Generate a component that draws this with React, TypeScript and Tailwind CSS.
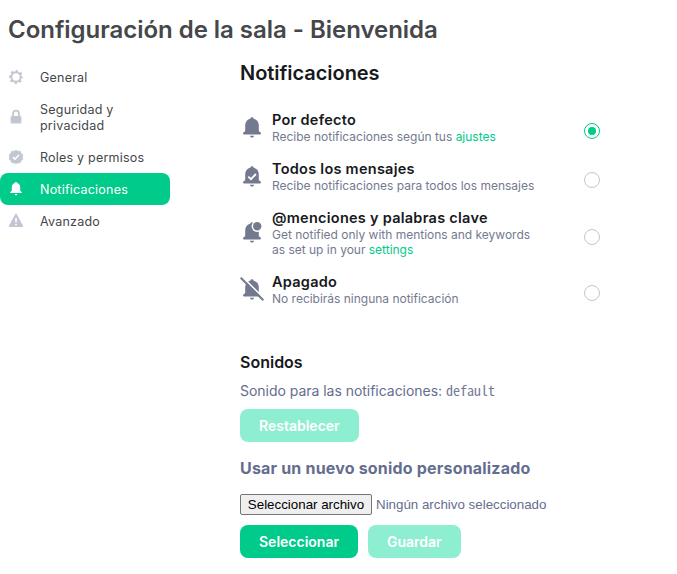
import type { ReactNode } from "react";

const BELL =
  "M12 2.300c.9 0 1.600.6 1.700 1.400 3.100.7 5.100 3.200 5.100 6.600v5.700l1.900 1.800c.7.7.4 1.600-.5 1.600H3.800c-.9 0-1.200-.9-.5-1.600l1.900-1.800v-5.700c0-3.400 2-5.900 5.100-6.600 .1-.8.8-1.400 1.700-1.400Z";
const CLAPPER = "M10 20.700h4c0 1.100-.9 1.800-2 1.800s-2-.7-2-1.800Z";

function GearIcon() {
  return (
    <svg className="size-4" viewBox="0 0 16 16" fill="none" stroke="currentColor">
      <circle cx="8" cy="8" r="4.700" strokeWidth="2" />
      <circle cx="8" cy="8" r="6.100" strokeWidth="2" strokeDasharray="2.200 2.590" strokeDashoffset="1.100" />
    </svg>
  );
}

function LockIcon() {
  return (
    <svg className="size-4" viewBox="0 0 16 16">
      <rect x="2.600" y="7" width="10.800" height="7.500" rx="1.400" fill="currentColor" />
      <path d="M5 8V4.600a3 3 0 0 1 6 0v3.400" fill="none" stroke="currentColor" strokeWidth="1.800" />
    </svg>
  );
}

function RolesIcon() {
  return (
    <svg className="size-4" viewBox="0 0 16 16">
      <path
        d="M8 1.200l2 1 2.400 0 .8 2.200 1.800 1.500L14.300 8l.7 2.200-1.800 1.500-.8 2.100-2.400.1L8 14.800l-2-.9-2.400-.1-.8-2.100L1 10.200 1.700 8 1 5.900l1.800-1.500.8-2.200H6z"
        fill="currentColor"
        stroke="currentColor"
        strokeWidth=".5"
        strokeLinejoin="round"
      />
      <path d="M4.900 8.100l2.100 2 4-4.100" fill="none" stroke="white" strokeWidth="1.500" />
    </svg>
  );
}

function SmallBellIcon() {
  return (
    <svg className="size-4" viewBox="0 0 16 16" fill="currentColor">
      <path d="M8 1c.6 0 1 .4 1 1 2 .5 3.200 2 3.200 4.200v3.400l1.400 1.500c.5.5.2 1-.4 1H2.800c-.6 0-.9-.5-.4-1l1.400-1.500V6.200C3.800 4 5 2.500 7 2c0-.6.4-1 1-1Z" />
      <path d="M6.700 13h2.600c0 .8-.5 1.300-1.300 1.300S6.700 13.800 6.700 13Z" />
    </svg>
  );
}

function WarningIcon() {
  return (
    <svg className="size-4" viewBox="0 0 16 16">
      <path d="M8 1.800l6.200 11.400H1.800z" fill="currentColor" stroke="currentColor" strokeWidth="1.800" strokeLinejoin="round" />
      <path d="M8 5v4.500M8 11v1.600" stroke="white" strokeWidth="1.600" />
    </svg>
  );
}

function Bell({ kind }: { kind: "plain" | "check" | "dot" | "off" }) {
  return (
    <svg className="-mt-[2px] size-6 shrink-0 text-[#737a90]" viewBox="0 0 24 24">
      <path d={BELL} fill="currentColor" />
      <path d={CLAPPER} fill="currentColor" />
      {kind === "check" && <path d="M8.300 12.600l2.700 2.600 4.900-5.200" fill="none" stroke="white" strokeWidth="1.900" />}
      {kind === "dot" && (
        <>
          <circle cx="17.200" cy="6.300" r="5.600" fill="white" />
          <circle cx="17.200" cy="6.300" r="4.200" fill="currentColor" />
        </>
      )}
      {kind === "off" && (
        <>
          <path d="M2 -.5L25 22.500" stroke="white" strokeWidth="1.600" />
          <path d="M.7 .7L23.300 23.300" stroke="currentColor" strokeWidth="2" />
        </>
      )}
    </svg>
  );
}

function Tab({ icon, children, active = false }: { icon: ReactNode; children: ReactNode; active?: boolean }) {
  return (
    <div
      className={`flex w-[170px] items-center rounded-lg py-2 pl-2 text-[12.5px] leading-4 tracking-[0.22px] ${
        active ? "bg-[#00cb8a] text-white" : "text-[#45474a]"
      }`}
    >
      <span className={active ? "text-white" : "text-[#c1c6d0]"}>{icon}</span>
      <span className="ml-4 w-[106px] translate-y-px">{children}</span>
    </div>
  );
}

function Option({
  kind,
  title,
  checked = false,
  children,
}: {
  kind: "plain" | "check" | "dot" | "off";
  title: string;
  checked?: boolean;
  children: ReactNode;
}) {
  return (
    <label className="flex w-[360px] items-center">
      <Bell kind={kind} />
      <span className="ml-2 flex-1">
        <span className="block text-[14.500px] leading-[18px] font-semibold tracking-[0.26px] text-[#17191c]">{title}</span>
        <span className="block text-xs leading-[15px] tracking-[-0.01px] whitespace-nowrap text-[#737a90]">{children}</span>
      </span>
      <span
        className={`mt-[7px] flex size-4 shrink-0 items-center justify-center rounded-full border ${
          checked ? "border-[#00cb8a]" : "border-[#c1c6d0]"
        }`}
      >
        {checked && <span className="size-2 rounded-full bg-[#00cb8a]" />}
      </span>
    </label>
  );
}

function Button({ children, disabled = false }: { children: ReactNode; disabled?: boolean }) {
  return (
    <button
      disabled={disabled}
      className={`h-[33px] rounded-lg px-[19px] text-sm font-semibold text-white ${
        disabled ? "bg-[#8eeed1]" : "bg-[#00cb8a]"
      }`}
    >
      {children}
    </button>
  );
}

export default function App() {
  return (
    <div className="h-[574px] w-[677px] overflow-hidden bg-white font-['Inter',sans-serif]">
      <h1 className="h-[61px] pt-[14px] pl-2 text-[24px] leading-8 font-semibold tracking-[-0.03px] text-[#45474a]">
        Configuración de la sala - Bienvenida
      </h1>
      <div className="flex">
        <nav className="w-60 shrink-0">
          <Tab icon={<GearIcon />}>General</Tab>
          <Tab icon={<LockIcon />}>
            Seguridad y<br />
            privacidad
          </Tab>
          <Tab icon={<RolesIcon />}>Roles y permisos</Tab>
          <Tab icon={<SmallBellIcon />} active>
            Notificaciones
          </Tab>
          <Tab icon={<WarningIcon />}>Avanzado</Tab>
        </nav>
        <main className="text-[#656d8f]">
          <h2 className="h-[50px] text-[20px] leading-6 font-semibold tracking-[-0.05px] text-[#17191c]">Notificaciones</h2>
          <div className="flex flex-col gap-4">
            <Option kind="plain" title="Por defecto" checked>
              Recibe notificaciones según tus <a className="text-[#00cb8a]">ajustes</a>
            </Option>
            <Option kind="check" title="Todos los mensajes">
              Recibe notificaciones para todos los mensajes
            </Option>
            <Option kind="dot" title="@menciones y palabras clave">
              Get notified only with mentions and keywords
              <br />
              as set up in your <a className="text-[#00cb8a]">settings</a>
            </Option>
            <Option kind="off" title="Apagado">
              No recibirás ninguna notificación
            </Option>
          </div>
          <h3 className="mt-[46px] text-base leading-5 font-semibold text-[#17191c]">Sonidos</h3>
          <p className="mt-[8px] h-[21px] text-sm leading-5 tracking-[-0.03px]">
            Sonido para las notificaciones:{" "}
            <code className="font-['Noto_Sans_Mono_CJK_SC','Liberation_Mono',monospace] text-sm leading-5 font-light tracking-normal opacity-90">default</code>
          </p>
          <div className="mt-2 flex">
            <Button disabled>Restablecer</Button>
          </div>
          <h3 className="mt-4 text-base leading-5 font-bold tracking-[0.19px] whitespace-nowrap">Usar un nuevo sonido personalizado</h3>
          <div className="mt-4 flex items-center font-['Liberation_Sans',sans-serif] text-[13.333px] leading-[15px]">
            <button className="h-[21px] w-[132px] rounded-[2px] border border-[#767676] bg-[#efefef] whitespace-nowrap text-black">
              Seleccionar archivo
            </button>
            <span className="ml-1">Ningún archivo seleccionado</span>
          </div>
          <div className="mt-[10px] flex gap-[10px]">
            <Button>Seleccionar</Button>
            <Button disabled>Guardar</Button>
          </div>
        </main>
      </div>
    </div>
  );
}
